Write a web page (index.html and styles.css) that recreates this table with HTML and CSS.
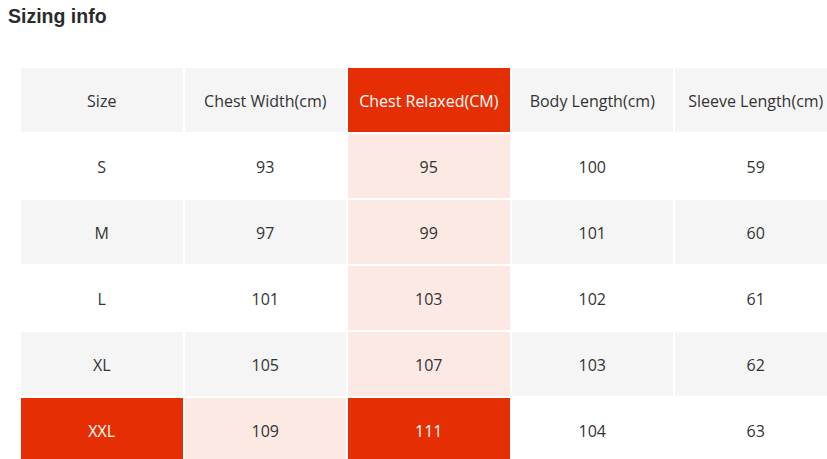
FILE: index.html
```html
<!DOCTYPE html>
<html>
<head>
<meta charset="utf-8">
<link rel="stylesheet" href="styles.css">
</head>
<body>
<h2 class="title">Sizing info</h2>
<div class="table">
  <div class="cell head">Size</div>
  <div class="cell head">Chest Width(cm)</div>
  <div class="cell red">Chest Relaxed(CM)</div>
  <div class="cell head">Body Length(cm)</div>
  <div class="cell head">Sleeve Length(cm)</div>

  <div class="cell">S</div>
  <div class="cell">93</div>
  <div class="cell pink">95</div>
  <div class="cell">100</div>
  <div class="cell">59</div>

  <div class="cell grey">M</div>
  <div class="cell grey">97</div>
  <div class="cell pink">99</div>
  <div class="cell grey">101</div>
  <div class="cell grey">60</div>

  <div class="cell">L</div>
  <div class="cell">101</div>
  <div class="cell pink">103</div>
  <div class="cell">102</div>
  <div class="cell">61</div>

  <div class="cell grey">XL</div>
  <div class="cell grey">105</div>
  <div class="cell pink">107</div>
  <div class="cell grey">103</div>
  <div class="cell grey">62</div>

  <div class="cell red">XXL</div>
  <div class="cell pink">109</div>
  <div class="cell red">111</div>
  <div class="cell">104</div>
  <div class="cell">63</div>
</div>
</body>
</html>
```

FILE: styles.css
```css
html, body {
  margin: 0;
  padding: 0;
  background: #fff;
  overflow: hidden;
}
body {
  padding: 8px;
  font-family: "Open Sans", "Liberation Sans", sans-serif;
  color: #333;
}
.title {
  margin: 0;
  font-family: "Liberation Sans", Arial, sans-serif;
  font-size: 19.5px;
  font-weight: bold;
  line-height: 17px;
  color: #2b2b2b;
}
.table {
  margin-top: 43px;
  margin-left: 13px;
  display: grid;
  grid-template-columns: repeat(5, 161.5px);
  grid-auto-rows: 64px;
  gap: 2px;
  width: max-content;
}
.cell {
  display: flex;
  align-items: center;
  justify-content: center;
  padding-top: 2px;
  box-sizing: border-box;
  font-size: 16px;
  color: #333;
  background: #fff;
}
.head, .grey {
  background: #f5f5f5;
}
.red {
  background: #e62e04;
  color: #fff;
}
.pink {
  background: #fde9e4;
}
```
